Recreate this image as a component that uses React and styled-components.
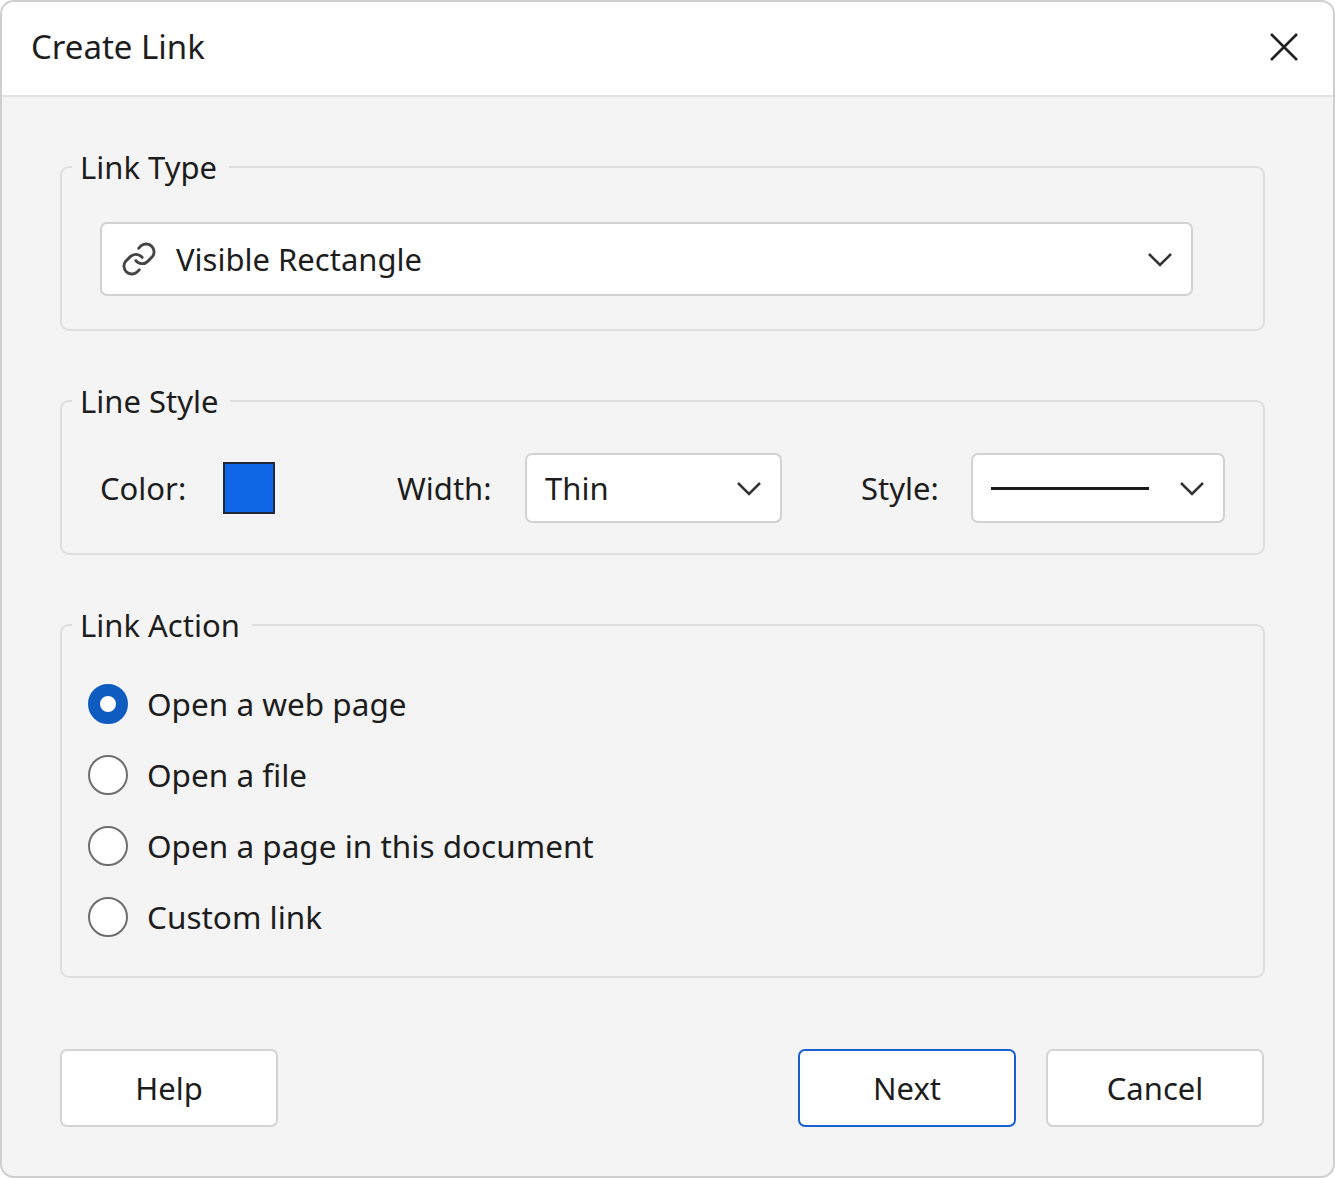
import React, { useState } from 'react';
import styled, { createGlobalStyle } from 'styled-components';

const Global = createGlobalStyle`
  body { margin: 0; background: #fff; font-family: "Noto Sans", "Open Sans", sans-serif; color: #1d1d1d; }
  * { box-sizing: border-box; }
`;

const Dialog = styled.div`
  width: 1335px;
  height: 1178px;
  border: 2px solid #cfcfcf;
  border-radius: 14px;
  overflow: hidden;
  background: #f4f4f4;
  display: flex;
  flex-direction: column;
`;

const Header = styled.div`
  height: 95px;
  flex-shrink: 0;
  background: #fff;
  border-bottom: 2px solid #e2e2e2;
  display: flex;
  align-items: center;
  justify-content: space-between;
  padding: 0 34px 4px 29px;
  h1 { margin: 0; font-size: 33px; font-weight: 400; }
`;

const Body = styled.div`
  padding: 50px 68px 0 58px;
  display: flex;
  flex-direction: column;
  gap: 50px;
`;

const Group = styled.fieldset`
  margin: 0;
  border: 2px solid #dedede;
  border-radius: 9px;
  padding: ${p => p.$pad};
  min-width: 0;
  legend {
    font-size: 31px;
    line-height: 40px;
    padding: 0 12px 0 8px;
    margin-left: ${p => p.$lm}px;
  }
`;

const Select = styled.div`
  background: #fff;
  border: 2px solid #d2d2d2;
  border-radius: 7px;
  height: ${p => p.$h || 70}px;
  width: ${p => p.$w}px;
  display: flex;
  align-items: center;
  padding: 0 18px 0 18px;
  gap: 18px;
  font-size: 31px;
  span { flex: 1; }
`;

const Row = styled.div`
  display: flex;
  align-items: center;
  font-size: 31px;
`;

const Label = styled.div`
  width: ${p => p.$w}px;
`;

const Swatch = styled.div`
  width: 52px;
  height: 52px;
  background: #1166e8;
  border: 2px solid #1f2a3a;
`;

const Line = styled.div`
  flex: 1;
  height: 3px;
  background: #1a1a1a;
  margin-right: 12px;
`;

const Radio = styled.label`
  display: flex;
  align-items: center;
  height: 71px;
  gap: 19px;
  font-size: 31.5px;
  cursor: pointer;
  &::before {
    content: '';
    width: 40px;
    height: 40px;
    border-radius: 50%;
    box-sizing: border-box;
    border: ${p => (p.$on ? '12px solid #0f5cc0' : '2px solid #6e6e6e')};
    background: #fff;
  }
`;

const Footer = styled.div`
  display: flex;
  padding: 71px 69px 0 58px;
  gap: 30px;
`;

const Button = styled.button`
  width: 218px;
  height: 78px;
  background: #fff;
  border: 2px solid ${p => (p.$primary ? '#1a5fd0' : '#d4d4d4')};
  border-radius: 7px;
  font-family: inherit;
  font-size: 31px;
  color: #1d1d1d;
  margin-left: ${p => p.$push ? 'auto' : '0'};
`;

const Chevron = () => (
  <svg width="26" height="16" viewBox="0 0 26 16" fill="none" stroke="#333" strokeWidth="2.5">
    <path d="M2 3l11 11L24 3" />
  </svg>
);

const options = ['Open a web page', 'Open a file', 'Open a page in this document', 'Custom link'];

export default function App() {
  const [sel, setSel] = useState(0);
  return (
    <Dialog>
      <Global />
      <Header>
        <h1>Create Link</h1>
        <svg width="30" height="30" viewBox="0 0 30 30" stroke="#222" strokeWidth="2.6">
          <path d="M2 2l26 26M28 2L2 28" />
        </svg>
      </Header>
      <Body>
        <Group $pad="35px 70px 33px 38px" $lm={-28}>
          <legend>Link Type</legend>
          <Select $h={74} $w={1093}>
            <svg width="38" height="38" viewBox="0 0 24 24" fill="none" stroke="#444" strokeWidth="1.8" strokeLinecap="round">
              <path d="M10 13a5 5 0 0 0 7.5.5l3-3a5 5 0 0 0-7-7l-1.7 1.7" />
              <path d="M14 11a5 5 0 0 0-7.5-.5l-3 3a5 5 0 0 0 7 7l1.7-1.7" />
            </svg>
            <span>Visible Rectangle</span>
            <Chevron />
          </Select>
        </Group>
        <Group $pad="32px 38px 30px 38px" $lm={-28}>
          <legend>Line Style</legend>
          <Row>
            <Label $w={123}>Color:</Label>
            <Swatch />
            <Label $w={122} />
            <Label $w={128}>Width:</Label>
            <Select $w={257}><span>Thin</span><Chevron /></Select>
            <Label $w={79} />
            <Label $w={110}>Style:</Label>
            <Select $w={254}><Line /><Chevron /></Select>
          </Row>
        </Group>
        <Group $pad="23px 38px 24px 26px" $lm={-16}>
          <legend>Link Action</legend>
          {options.map((o, i) => (
            <Radio key={o} $on={sel === i} onClick={() => setSel(i)}>{o}</Radio>
          ))}
        </Group>
      </Body>
      <Footer>
        <Button>Help</Button>
        <Button $primary $push>Next</Button>
        <Button>Cancel</Button>
      </Footer>
    </Dialog>
  );
}
